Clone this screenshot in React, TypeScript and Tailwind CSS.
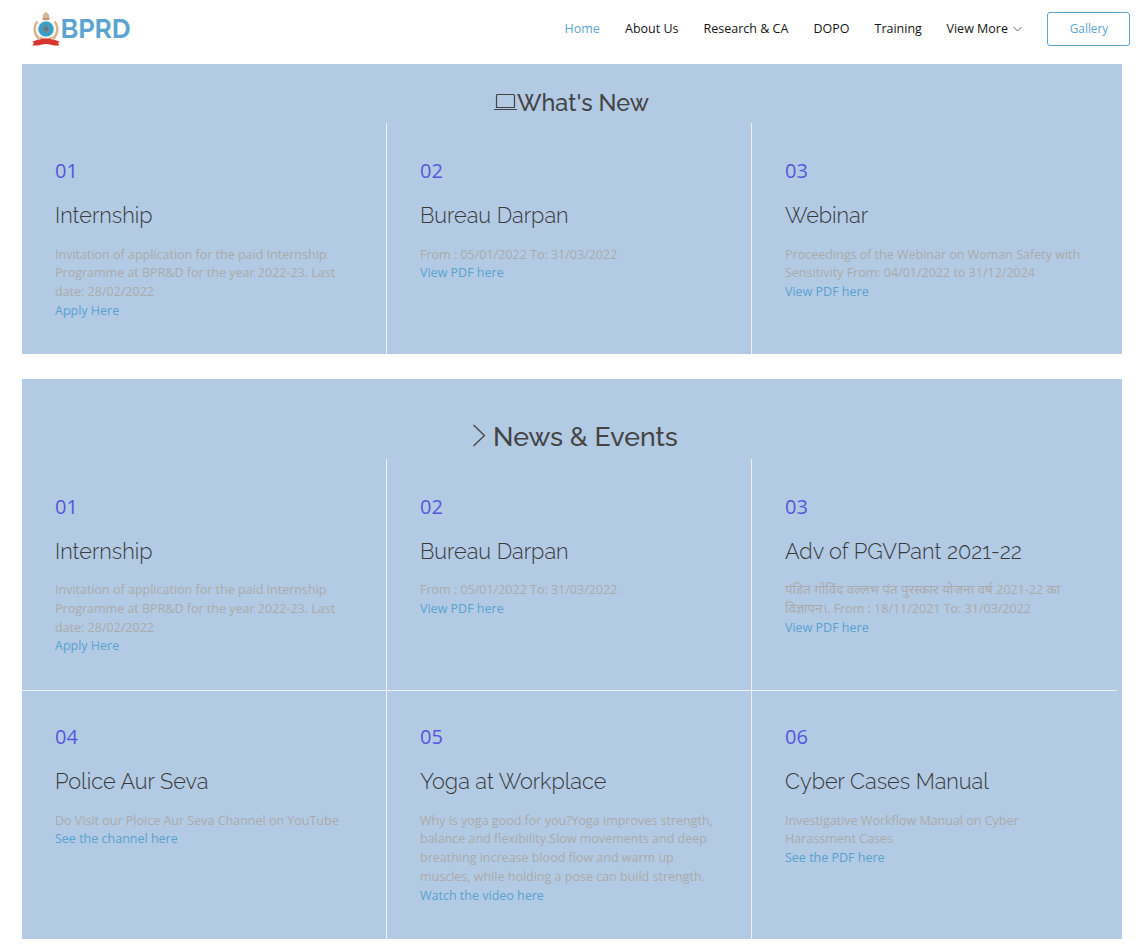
import type { ReactNode } from 'react';

type Item = { no: string; title: string; lines: ReactNode[]; link: string };

const whatsNew: Item[] = [
  { no: '01', title: 'Internship', lines: ['Invitation of application for the paid Internship', 'Programme at BPR&D for the year 2022-23. Last', 'date: 28/02/2022'], link: 'Apply Here' },
  { no: '02', title: 'Bureau Darpan', lines: ['From : 05/01/2022 To: 31/03/2022'], link: 'View PDF here' },
  { no: '03', title: 'Webinar', lines: ['Proceedings of the Webinar on Woman Safety with', 'Sensitivity From: 04/01/2022 to 31/12/2024'], link: 'View PDF here' },
];

const newsTop: Item[] = [
  whatsNew[0],
  whatsNew[1],
  {
    no: '03',
    title: 'Adv of PGVPant 2021-22',
    lines: [
      <><span className="text-[13.4px] leading-none">पंडित गोविंद वल्लभ पंत पुरस्कार योजना वर्ष </span>2021-22 <span className="text-[13.4px] leading-none">का</span></>,
      <><span className="text-[13.1px] leading-none">विज्ञापन।</span>. From : 18/11/2021 To: 31/03/2022</>,
    ],
    link: 'View PDF here',
  },
];

const newsBottom: Item[] = [
  { no: '04', title: 'Police Aur Seva', lines: ['Do Visit our Ploice Aur Seva Channel on YouTube'], link: 'See the channel here' },
  { no: '05', title: 'Yoga at Workplace', lines: ['Why is yoga good for you?Yoga improves strength,', 'balance and flexibility.Slow movements and deep', 'breathing increase blood flow and warm up', 'muscles, while holding a pose can build strength.'], link: 'Watch the video here' },
  { no: '06', title: 'Cyber Cases Manual', lines: ['Investigative Workflow Manual on Cyber', 'Harassment Cases'], link: 'See the PDF here' },
];

function Row({ items, className, bodyGap = 'mt-[15.5px]' }: { items: Item[]; className: string; bodyGap?: string }) {
  return (
    <div className={`grid w-[1095px] grid-cols-3 ${className}`}>
      {items.map((item, i) => (
        <article key={item.no} className={`pl-[33px] whitespace-nowrap ${i < 2 ? 'border-r border-[#f0f0f0]' : ''}`}>
          <div className="pt-[33px] text-[20px] leading-[30px] text-[#5457dc]">{item.no}</div>
          <h3 className="mt-[16px] font-['Raleway','Lato',sans-serif] text-[21.7px] leading-[28px] font-light text-[#37393b]">{item.title}</h3>
          <div className={`text-[12.5px] leading-[18.75px] text-[#aaaaaa] ${bodyGap}`}>
            {item.lines.map((line, n) => <p key={n} className="h-[18.75px]">{line}</p>)}
            <a href="#" className="block text-[#58a2d0]">{item.link}</a>
          </div>
        </article>
      ))}
    </div>
  );
}

function Emblem() {
  return (
    <svg width="30" height="36" viewBox="0 0 30 36" aria-hidden="true" className="shrink-0">
      <path d="M6.500 10.500C2 16 3 23 8 28M23.500 10.500C28 16 27 23 22 28" fill="none" stroke="#d9b68f" strokeWidth="2.500" />
      <path d="M12.500 8L11.500 5l1.500-2.500L15 1l2 1.500L18.500 5l-1 3z" fill="#d3b695" />
      <path d="M11 7h8l-1 2h-6z" fill="#c09a78" />
      <circle cx="15" cy="18" r="9" fill="#efe6d3" />
      <circle cx="15" cy="18" r="7.600" fill="#2fa3cf" />
      <circle cx="15" cy="18" r="4.400" fill="#6690a0" />
      <path d="M13 16h4v4h-4z" fill="#5b7c88" />
      <path d="M8 25.500l7 2.500 7-2.500-2 3H10z" fill="#d0a375" />
      <path d="M1.500 30.500l4.500-1.500q9-3 18 0l4.500 1.500-1.500 1.500 1.500 2.500-5.500 0q-8-3-16 0l-5.500 0 1.500-2.500z" fill="#d8352f" />
    </svg>
  );
}

function Nav({ children, className = '' }: { children: ReactNode; className?: string }) {
  return <a href="#" className={`whitespace-nowrap ${className}`}>{children}</a>;
}

export default function App() {
  return (
    <div className="h-[947px] w-[1145px] overflow-hidden bg-white font-['Open_Sans','Noto_Sans',sans-serif]">
      <header className="flex h-[64px] items-start pl-[31px]">
        <div className="flex w-[533.5px] items-start pt-[11px]">
          <Emblem />
          <span className="-ml-[0.4px] font-['Raleway','Lato',sans-serif] text-[26px] leading-[36px] font-bold text-[#5ea4d1]">BPRD</span>
        </div>
        <nav className="flex pt-[19px] text-[12.5px] leading-[20px] text-[#151515]">
          <Nav className="w-[60.5px] text-[#5ea4d1]">Home</Nav>
          <Nav className="w-[78.5px]">About Us</Nav>
          <Nav className="w-[110px]">Research &amp; CA</Nav>
          <Nav className="w-[61px]">DOPO</Nav>
          <Nav className="w-[72px]">Training</Nav>
          <Nav className="flex w-[100.5px] items-center gap-[5px]">
            View More
            <svg width="9" height="6" viewBox="0 0 9 6"><path d="M.5 1l4 4 4-4" fill="none" stroke="#555" strokeWidth=".9" /></svg>
          </Nav>
        </nav>
        <a href="#" className="mt-[12px] flex h-[34px] w-[83px] items-center justify-center rounded-[3px] border border-[#5ea4d1] pl-px text-[11.8px] text-[#5ea4d1]">Gallery</a>
      </header>
      <main className="ml-[22px] w-[1100px]">
        <section className="h-[290px] bg-[#b3cae4]">
          <h2 className="flex h-[59px] pt-[24px] pl-[471px] font-['Raleway','Lato',sans-serif] text-[23.4px] leading-[30px] font-medium whitespace-nowrap text-[#444444]">
            <svg width="24" height="20" viewBox="0 0 24 20" className="mt-[4px] shrink-0"><path d="M3.500 15V3.500q0-1 1-1h16q1 0 1 1V15M3 15.500h19M1 17.500h23" fill="none" stroke="#444" strokeWidth="1.200" /></svg>
            <span>What's New</span>
          </h2>
          <Row items={whatsNew} className="h-[231px]" />
        </section>
        <section className="mt-[25px] h-[560px] bg-[#b3cae4]">
          <h2 className="flex h-[80px] pt-[42px] pl-[450px] font-['Raleway','Lato',sans-serif] text-[26.6px] leading-[32px] font-medium whitespace-nowrap text-[#444444]">
            <svg width="21" height="26" viewBox="0 0 21 26" className="mt-[2px] shrink-0"><path d="M1.500 2L12.500 12.500 1.500 23" fill="none" stroke="#444" strokeWidth="1.300" /></svg>
            <span>News &amp; Events</span>
          </h2>
          <Row items={newsTop} bodyGap="mt-[15px]" className="h-[232px] border-b border-[#f0f0f0]" />
          <Row items={newsBottom} className="-mt-[2px] h-[250px]" />
        </section>
      </main>
    </div>
  );
}
